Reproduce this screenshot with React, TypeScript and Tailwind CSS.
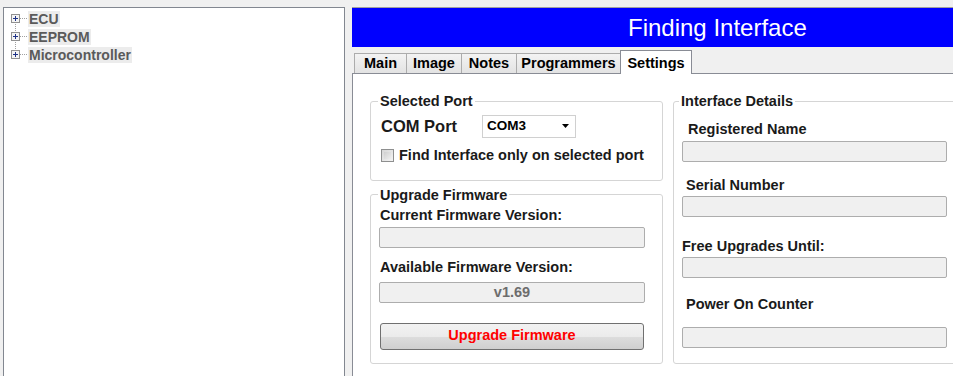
import React from "react";

const treeItems = ["ECU", "EEPROM", "Microcontroller"];
const tabs = ["Main", "Image", "Notes", "Programmers"];

const TreeGlyph: React.FC<{ first: boolean; last: boolean }> = ({ first, last }) => (
  <svg width="20" height="18" viewBox="0 0 20 18" className="shrink-0">
    {!first && <line x1="7.5" y1="0" x2="7.5" y2="4" stroke="#a0a0a0" strokeDasharray="1 1" />}
    {!last && <line x1="7.5" y1="14" x2="7.5" y2="18" stroke="#a0a0a0" strokeDasharray="1 1" />}
    <line x1="12" y1="8.5" x2="20" y2="8.5" stroke="#a0a0a0" strokeDasharray="1 1" />
    <rect x="3.5" y="4.5" width="8" height="8" fill="#f4f4f4" stroke="#919191" />
    <line x1="5" y1="8.5" x2="10" y2="8.5" stroke="#1e3287" />
    <line x1="7.5" y1="6" x2="7.5" y2="11" stroke="#1e3287" />
  </svg>
);

const Field: React.FC<{ className?: string; value?: string; w: string }> = ({ className, value, w }) => (
  <div
    className={`${w} ${className ?? ""} h-[21px] bg-[#f0f0f0] border border-[#adadad] rounded-[2px] flex items-center justify-center text-[#6d6d6d] font-bold text-[14.5px] leading-none`}
  >
    {value}
  </div>
);

export default function App() {
  return (
    <div className="w-[953px] h-[376px] overflow-hidden bg-[#f0f0f0] flex pt-[7px] pl-[3px] font-['Liberation_Sans',Arial,sans-serif] text-[#1a1a1a]">
      {/* tree */}
      <div className="w-[342px] h-[400px] shrink-0 bg-white border border-[#828790] pt-[2px] pl-[4px]">
        {treeItems.map((item, i) => (
          <div key={item} className="flex items-center h-[18px]">
            <TreeGlyph first={i === 0} last={i === treeItems.length - 1} />
            <span className="bg-[#ececec] text-[#5a5a5a] font-bold text-[14px] leading-[16px] px-[1px]">
              {item}
            </span>
          </div>
        ))}
      </div>

      {/* right side */}
      <div className="ml-[7px] flex flex-col w-[601px] shrink-0">
        <div className="h-[40px] bg-[#0000ff] border-t border-[#a0a0a0] flex items-center pl-[276px]">
          <span className="text-white text-[24px] leading-none whitespace-nowrap">Finding Interface</span>
        </div>

        <div className="h-[26px] flex items-end pl-[2px]">
          {tabs.map((t, i) => (
            <div
              key={t}
              className={`h-[20px] flex items-center justify-center border-t border-l border-r border-[#acacac] bg-linear-to-b from-[#f3f3f3] to-[#e3e3e3] font-bold text-[14.5px] text-black ${i > 0 ? "-ml-px" : ""} ${
                ["w-[53px]", "w-[56px]", "w-[56px]", "w-[105px]"][i]
              }`}
            >
              {t}
            </div>
          ))}
          <div className="relative z-10 -ml-px -mb-px h-[24px] w-[72px] bg-white border-t border-l border-r border-[#898c95] flex items-start justify-center pt-[2px] font-bold text-[14.5px] text-black">
            Settings
          </div>
        </div>

        <div className="flex-1 bg-white border-t border-l border-[#898c95] pt-[19px] pl-[17px] flex gap-[10px]">
          {/* left column */}
          <div className="w-[293px] shrink-0 flex flex-col">
            <fieldset className="border border-[#d5d5d5] rounded-[3px] px-[8px] pb-[17px]">
              <legend className="-ml-px px-[2px] font-bold text-[14.5px] leading-[16px]">Selected Port</legend>
              <div className="mt-[5px] flex items-center">
                <span className="ml-[2px] w-[101px] font-bold text-[16.5px]">COM Port</span>
                <div className="w-[94px] h-[23px] bg-white border border-[#d0d0d0] flex items-center pl-[4px] pr-[6px] justify-between">
                  <span className="font-bold text-[13.5px] text-black">COM3</span>
                  <svg width="7" height="4" viewBox="0 0 7 4">
                    <path d="M0 0 H7 L3.5 4 Z" fill="#000" />
                  </svg>
                </div>
              </div>
              <div className="mt-[10px] h-[14px] flex items-center">
                <div className="ml-[2px] w-[13px] h-[13px] border border-[#8e8f8f] bg-linear-to-br from-[#d6d6d6] to-[#f4f4f4] p-[2px]">
                  <div className="w-full h-full bg-linear-to-br from-[#cfcfcf] to-[#eeeeee]" />
                </div>
                <span className="ml-[5px] font-bold text-[14.5px] whitespace-nowrap">Find Interface only on selected port</span>
              </div>
            </fieldset>

            <fieldset className="mt-[6px] border border-[#d5d5d5] rounded-[3px] px-[8px] pb-[13px]">
              <legend className="-ml-px px-[2px] font-bold text-[14.5px] leading-[16px]">Upgrade Firmware</legend>
              <div className="mt-[4px] ml-px h-[16px] leading-[16px] font-bold text-[14.5px]">Current Firmware Version:</div>
              <Field w="w-[266px]" className="mt-[4px]" />
              <div className="mt-[11px] ml-px h-[16px] leading-[16px] font-bold text-[14.5px]">Available Firmware Version:</div>
              <Field w="w-[266px]" className="mt-[7px]" value="v1.69" />
              <button
                type="button"
                className="mt-[20px] ml-px w-[264px] h-[27px] rounded-[3px] border border-[#707070] bg-[linear-gradient(#f2f2f2_0%,#ebebeb_50%,#dddddd_50%,#cfcfcf_100%)] text-[#ff0000] font-bold text-[14.5px] flex items-center justify-center"
              >
                Upgrade Firmware
              </button>
            </fieldset>
          </div>

          {/* right column */}
          <div className="w-[300px] shrink-0">
            <fieldset className="border border-[#d5d5d5] rounded-[3px] px-[8px] pb-[15px]">
              <legend className="-ml-[3px] px-[2px] font-bold text-[14.5px] leading-[16px]">Interface Details</legend>
              <div className="mt-[12px] ml-[6px] h-[16px] leading-[16px] font-bold text-[14.5px]">Registered Name</div>
              <Field w="w-[265px]" className="mt-[4px]" />
              <div className="mt-[15px] ml-[4px] h-[16px] leading-[16px] font-bold text-[14.5px]">Serial Number</div>
              <Field w="w-[265px]" className="mt-[3px]" />
              <div className="mt-[21px] h-[16px] leading-[16px] font-bold text-[14.5px]">Free Upgrades Until:</div>
              <Field w="w-[265px]" className="mt-[3px]" />
              <div className="mt-[18px] ml-[4px] h-[16px] leading-[16px] font-bold text-[14.5px]">Power On Counter</div>
              <Field w="w-[265px]" className="mt-[15px]" />
            </fieldset>
          </div>
        </div>
      </div>
    </div>
  );
}
